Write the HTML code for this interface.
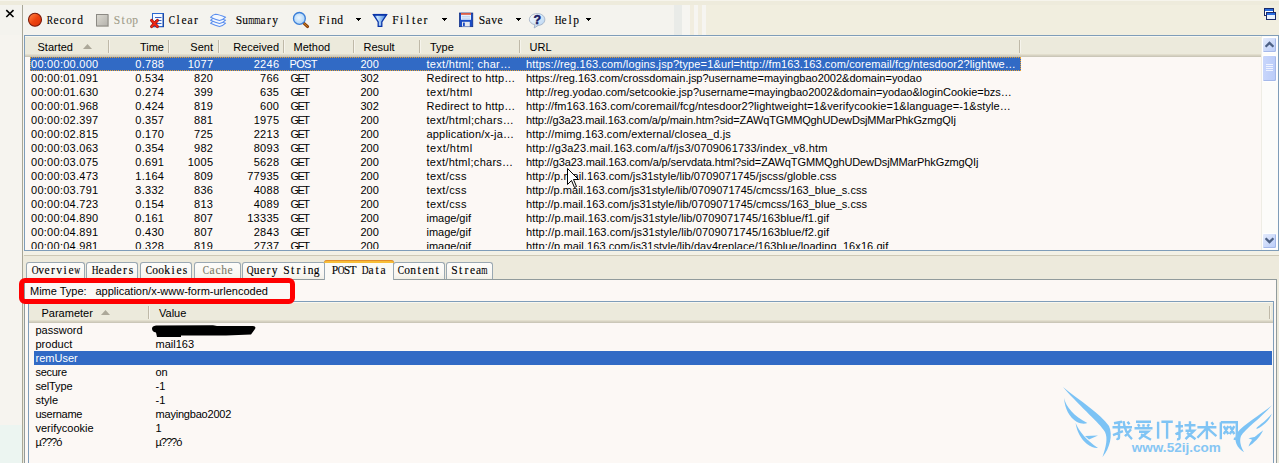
<!DOCTYPE html>
<html><head><meta charset="utf-8">
<style>
*{margin:0;padding:0;box-sizing:border-box}
html,body{width:1279px;height:463px;overflow:hidden}
body{position:relative;background:#F1EEE1;font:11px "Liberation Sans",sans-serif;color:#000}
.a{position:absolute}
.t{position:absolute;white-space:pre;line-height:14px}
.r{text-align:right}
.tb{position:absolute;white-space:nowrap;font:11.5px "Liberation Serif",serif;line-height:14px;color:#000;-webkit-text-stroke:0.12px currentColor}
.c{display:inline-block;width:6px;text-align:center;height:14px}
.c i{font-style:normal;display:inline-block;margin:0 -4px}
.sep{position:absolute;width:1px;background:#BFB9A8;border-right:1px solid #F6F4EC;box-sizing:content-box}
</style></head><body>

<div class="a" style="left:0;top:0;width:674px;height:35px;background:#F4F3EE"></div>
<div class="a" style="left:674px;top:0;width:8px;height:35px;background:#E9EBE8"></div>
<div class="a" style="left:682px;top:0;width:8px;height:35px;background:#F6F5F1"></div>
<div class="a" style="left:690px;top:0;width:4px;height:35px;background:#F1EDDF"></div>
<div class="a" style="left:694px;top:0;width:4px;height:35px;background:#F6F5F1"></div>
<div class="a" style="left:698px;top:0;width:4px;height:35px;background:#F1EDDF"></div>
<div class="a" style="left:702px;top:0;width:4px;height:35px;background:#F6F5F1"></div>
<div class="a" style="left:706px;top:0;width:573px;height:35px;background:#F1EEDF"></div>
<div class="a" style="left:0;top:35px;width:24px;height:428px;background:#F6F4EF"></div>
<div class="a" style="left:0;top:0;width:1279px;height:5px;background:#EEEBDC"></div>
<div class="a" style="left:0;top:0;width:1279px;height:1px;background:#F6F4EC"></div>
<svg class="a" style="left:5px;top:9px" width="10" height="10" viewBox="0 0 10 10"><path d="M1.3 1.2 L8.5 8 M8.5 1.2 L1.3 8" stroke="#000" stroke-width="1.6"/></svg>
<div class="a" style="left:22px;top:5px;width:1px;height:458px;background:#A9A797"></div>
<div class="tb" style="left:47px;top:13px;color:#000"><span class="c"><i style="transform:scaleX(0.82)">R</i></span><span class="c"><i>e</i></span><span class="c"><i>c</i></span><span class="c"><i>o</i></span><span class="c"><i>r</i></span><span class="c"><i>d</i></span></div>
<div class="tb" style="left:114px;top:13px;color:#A19D8A"><span class="c"><i>S</i></span><span class="c"><i>t</i></span><span class="c"><i>o</i></span><span class="c"><i>p</i></span></div>
<div class="tb" style="left:169px;top:13px;color:#000"><span class="c"><i style="transform:scaleX(0.82)">C</i></span><span class="c"><i>l</i></span><span class="c"><i>e</i></span><span class="c"><i>a</i></span><span class="c"><i>r</i></span></div>
<div class="tb" style="left:236px;top:13px;color:#000"><span class="c"><i>S</i></span><span class="c"><i>u</i></span><span class="c"><i style="transform:scaleX(0.7)">m</i></span><span class="c"><i style="transform:scaleX(0.7)">m</i></span><span class="c"><i>a</i></span><span class="c"><i>r</i></span><span class="c"><i>y</i></span></div>
<div class="tb" style="left:319px;top:13px;color:#000"><span class="c"><i>F</i></span><span class="c"><i>i</i></span><span class="c"><i>n</i></span><span class="c"><i>d</i></span></div>
<div class="tb" style="left:392.5px;top:13px;color:#000"><span class="c"><i>F</i></span><span class="c"><i>i</i></span><span class="c"><i>l</i></span><span class="c"><i>t</i></span><span class="c"><i>e</i></span><span class="c"><i>r</i></span></div>
<div class="tb" style="left:479px;top:13px;color:#000"><span class="c"><i>S</i></span><span class="c"><i>a</i></span><span class="c"><i>v</i></span><span class="c"><i>e</i></span></div>
<div class="tb" style="left:555px;top:13px;color:#000"><span class="c"><i style="transform:scaleX(0.82)">H</i></span><span class="c"><i>e</i></span><span class="c"><i>l</i></span><span class="c"><i>p</i></span></div>
<svg class="a" style="left:356px;top:18px" width="6" height="4"><path d="M0 0H5V1H4V2H3V3H2V2H1V1H0Z" fill="#000"/></svg>
<svg class="a" style="left:442px;top:18px" width="6" height="4"><path d="M0 0H5V1H4V2H3V3H2V2H1V1H0Z" fill="#000"/></svg>
<svg class="a" style="left:516px;top:18px" width="6" height="4"><path d="M0 0H5V1H4V2H3V3H2V2H1V1H0Z" fill="#000"/></svg>
<svg class="a" style="left:586px;top:18px" width="6" height="4"><path d="M0 0H5V1H4V2H3V3H2V2H1V1H0Z" fill="#000"/></svg>
<svg class="a" style="left:27px;top:12px" width="16" height="16" viewBox="0 0 16 16">
<defs><linearGradient id="rg" x1="0" y1="0" x2="1" y2="1"><stop offset="0" stop-color="#FF8A50"/><stop offset="0.35" stop-color="#F55A20"/><stop offset="0.5" stop-color="#EE4410"/><stop offset="1" stop-color="#D83008"/></linearGradient></defs>
<circle cx="8" cy="7.8" r="6.5" fill="url(#rg)" stroke="#7A1A0A" stroke-width="1.1"/></svg>
<svg class="a" style="left:95px;top:13px" width="15" height="15" viewBox="0 0 15 15">
<defs><linearGradient id="sg" x1="0" y1="0" x2="1" y2="1"><stop offset="0" stop-color="#DCDAD2"/><stop offset="1" stop-color="#B4B2AC"/></linearGradient></defs>
<rect x="2" y="2" width="12" height="12" fill="#D8D6CC"/>
<rect x="1.5" y="1.5" width="11.5" height="11.5" fill="url(#sg)" stroke="#8C8A84" stroke-width="1"/></svg>
<svg class="a" style="left:149px;top:12px" width="17" height="17" viewBox="0 0 17 17">
<rect x="3.5" y="1.5" width="11" height="13" fill="#F4F9FF" stroke="#2C68D0" stroke-width="1"/><rect x="13.5" y="1.5" width="1.5" height="13.5" fill="#1848A8"/><rect x="4" y="15" width="11" height="1" fill="#C8CCD8"/>
<path d="M6 5.5H12.5M6 8.5H12.5M6 11.5H12.5" stroke="#2050C0" stroke-width="0.9"/>
<path d="M2.6 8.4 L8.4 14.6 M8.4 8.4 L2.6 14.6" stroke="#A01008" stroke-width="3" stroke-linecap="round"/>
<path d="M2.6 8.4 L8.4 14.6 M8.4 8.4 L2.6 14.6" stroke="#F02818" stroke-width="1.6" stroke-linecap="round"/></svg>
<svg class="a" style="left:209px;top:12px" width="18" height="16" viewBox="0 0 18 16">
<g fill="#F4F8FE" stroke="#5A8EEE" stroke-width="1.05" stroke-linejoin="round">
<path id="lay" d="M1.6 11.3 Q4 8.6 6 8.5 Q9.5 8.8 16.6 11.2 Q13.5 14.2 10.5 14.6 Q6.5 13.6 1.6 11.3 Z"/>
<path d="M1.6 8.3 Q4 5.6 6 5.5 Q9.5 5.8 16.6 8.2 Q13.5 11.2 10.5 11.6 Q6.5 10.6 1.6 8.3 Z"/>
<path d="M1.6 5.3 Q4 2.6 6.5 2.3 Q10 2.6 16.6 5.2 Q13.5 8.2 10.5 8.6 Q6.5 7.6 1.6 5.3 Z"/>
</g></svg>
<svg class="a" style="left:292px;top:11px" width="18" height="18" viewBox="0 0 18 18">
<defs><radialGradient id="mg" cx="0.45" cy="0.45" r="0.6"><stop offset="0" stop-color="#EAF5FF"/><stop offset="1" stop-color="#A6D0F6"/></radialGradient></defs>
<path d="M11.6 12 L15.6 15.6" stroke="#8A3A08" stroke-width="3" stroke-linecap="round"/>
<path d="M11.8 12.2 L15.4 15.4" stroke="#D09020" stroke-width="1" stroke-linecap="round"/>
<circle cx="7.4" cy="7.4" r="5.9" fill="url(#mg)" stroke="#3A7ED8" stroke-width="1.3"/></svg>
<svg class="a" style="left:372px;top:12px" width="16" height="16" viewBox="0 0 16 16">
<defs><linearGradient id="fg" x1="0" y1="0" x2="1" y2="0"><stop offset="0" stop-color="#4A8CE0"/><stop offset="0.3" stop-color="#C8E6FF"/><stop offset="1" stop-color="#3A7AD8"/></linearGradient></defs>
<path d="M1.4 2.6 H14.6 L9.8 10 V14.4 H6.2 V10 Z" fill="url(#fg)" stroke="#0A34A8" stroke-width="1.3" stroke-linejoin="miter"/>
<path d="M1.4 2.8 H14.6" stroke="#0A34A8" stroke-width="1.8"/></svg>
<svg class="a" style="left:459px;top:12px" width="15" height="16" viewBox="0 0 15 16">
<rect x="0.4" y="1" width="13.4" height="13.7" fill="#1C4CC4" stroke="#0C2A80" stroke-width="0.7"/>
<rect x="2" y="1.2" width="10" height="6.6" fill="#E2F0FF"/><rect x="2" y="1.2" width="10" height="1.5" fill="#E04420"/>
<path d="M3 4.6H11M3 6.2H11" stroke="#B0C4E0" stroke-width="0.6"/>
<rect x="3" y="9.8" width="7.8" height="4.7" fill="#E6E8EE"/><rect x="4" y="10.6" width="1.8" height="3.5" fill="#1C4CC4"/></svg>
<svg class="a" style="left:528px;top:12px" width="18" height="17" viewBox="0 0 18 17">
<defs><linearGradient id="hg" x1="0" y1="0" x2="1" y2="1"><stop offset="0" stop-color="#FFFFFF"/><stop offset="1" stop-color="#B0D0F0"/></linearGradient></defs>
<path d="M9.3 1.6 C13.8 1.6 16.8 4.2 16.8 7.6 C16.8 10.8 14 13.2 10.2 13.4 L6.2 16 L6.9 12.8 C3.6 12 1.4 10 1.4 7.6 C1.4 4.2 4.6 1.6 9.3 1.6Z" fill="url(#hg)" stroke="#98A8C0" stroke-width="0.8"/>
<text x="9.3" y="11.6" text-anchor="middle" font-family="Liberation Sans" font-weight="bold" font-size="12.5" fill="#1C1C64" stroke="#1C1C64" stroke-width="0.5">?</text></svg>
<svg class="a" style="left:1263px;top:7px" width="15" height="15" viewBox="0 0 15 15">
<rect x="1.5" y="1.5" width="9" height="7" fill="#FFFFFF" stroke="#1A2A6A"/><rect x="2" y="2" width="8" height="2" fill="#2A6CE0"/>
<rect x="3.5" y="5.5" width="9" height="7" fill="#EAF2FE" stroke="#1A2A6A"/><rect x="4" y="6" width="8" height="2" fill="#2A6CE0"/></svg>
<div class="a" style="left:24px;top:35px;width:1255px;height:216px;border:1px solid #7F9DB9;background:#FCF8F5"></div>
<div class="a" style="left:25px;top:36px;width:1237px;height:21px;background:#ECEADC"></div>
<div class="a" style="left:25px;top:36px;width:1236px;height:1px;background:#F8F7F0"></div>
<div class="a" style="left:25px;top:54px;width:1237px;height:1px;background:#E2DECD"></div>
<div class="a" style="left:25px;top:55px;width:1237px;height:1px;background:#D6D2C2"></div>
<div class="a" style="left:25px;top:56px;width:1237px;height:1px;background:#CBC7B8"></div>
<div class="sep" style="left:108px;top:40px;height:13px"></div>
<div class="sep" style="left:168px;top:40px;height:13px"></div>
<div class="sep" style="left:218px;top:40px;height:13px"></div>
<div class="sep" style="left:283px;top:40px;height:13px"></div>
<div class="sep" style="left:353px;top:40px;height:13px"></div>
<div class="sep" style="left:419px;top:40px;height:13px"></div>
<div class="sep" style="left:519px;top:40px;height:13px"></div>
<div class="sep" style="left:1019px;top:40px;height:13px"></div>
<svg class="a" style="left:83px;top:44px" width="9" height="5"><path d="M0 5 L4.5 0 L9 5Z" fill="#ACA899"/></svg>
<div class="t" style="left:37.5px;top:40px">Started</div>
<div class="t r" style="left:64px;width:100px;top:40px">Time</div>
<div class="t r" style="left:113px;width:100px;top:40px">Sent</div>
<div class="t r" style="left:179px;width:100px;top:40px">Received</div>
<div class="t" style="left:293.5px;top:40px">Method</div>
<div class="t" style="left:363.5px;top:40px">Result</div>
<div class="t" style="left:430px;top:40px">Type</div>
<div class="t" style="left:529.5px;top:40px">URL</div>
<div class="a" style="left:30px;top:57px;width:991px;height:14px;background:#316AC5;outline:1px dotted #E8A030;outline-offset:-1px"></div>
<div class="t" style="left:31px;top:57px;color:#FFFFFF;letter-spacing:0.27px">00:00:00.000</div>
<div class="t r" style="left:64.3px;width:100px;top:57px;color:#FFFFFF;letter-spacing:0.3px">0.788</div>
<div class="t r" style="left:113.3px;width:100px;top:57px;color:#FFFFFF;letter-spacing:0.3px">1077</div>
<div class="t r" style="left:179.3px;width:100px;top:57px;color:#FFFFFF;letter-spacing:0.3px">2246</div>
<div class="t" style="left:289.5px;top:57px;color:#FFFFFF;letter-spacing:-0.67px">POST</div>
<div class="t" style="left:360.5px;top:57px;color:#FFFFFF">200</div>
<div class="t" style="left:426.5px;top:57px;color:#FFFFFF;letter-spacing:0.300px">text/html; char…</div>
<div class="t" style="left:526px;top:57px;color:#FFFFFF;letter-spacing:0.132px">https://reg.163.com/logins.jsp?type=1&amp;url=http://fm163.163.com/coremail/fcg/ntesdoor2?lightwe…</div>
<div class="t" style="left:31px;top:71px;color:#000;letter-spacing:0.27px">00:00:01.091</div>
<div class="t r" style="left:64.3px;width:100px;top:71px;color:#000;letter-spacing:0.3px">0.534</div>
<div class="t r" style="left:113.3px;width:100px;top:71px;color:#000;letter-spacing:0.3px">820</div>
<div class="t r" style="left:179.3px;width:100px;top:71px;color:#000;letter-spacing:0.3px">766</div>
<div class="t" style="left:290.5px;top:71px;color:#000;letter-spacing:-1.6px">GET</div>
<div class="t" style="left:360.5px;top:71px;color:#000">302</div>
<div class="t" style="left:426.5px;top:71px;color:#000;letter-spacing:0.200px">Redirect to http…</div>
<div class="t" style="left:526px;top:71px;color:#000;letter-spacing:-0.006px">https://reg.163.com/crossdomain.jsp?username=mayingbao2002&amp;domain=yodao</div>
<div class="t" style="left:31px;top:85px;color:#000;letter-spacing:0.27px">00:00:01.630</div>
<div class="t r" style="left:64.3px;width:100px;top:85px;color:#000;letter-spacing:0.3px">0.274</div>
<div class="t r" style="left:113.3px;width:100px;top:85px;color:#000;letter-spacing:0.3px">399</div>
<div class="t r" style="left:179.3px;width:100px;top:85px;color:#000;letter-spacing:0.3px">635</div>
<div class="t" style="left:290.5px;top:85px;color:#000;letter-spacing:-1.6px">GET</div>
<div class="t" style="left:360.5px;top:85px;color:#000">200</div>
<div class="t" style="left:426.5px;top:85px;color:#000;letter-spacing:0.512px">text/html</div>
<div class="t" style="left:526px;top:85px;color:#000;letter-spacing:0.000px">http://reg.yodao.com/setcookie.jsp?username=mayingbao2002&amp;domain=yodao&amp;loginCookie=bzs…</div>
<div class="t" style="left:31px;top:99px;color:#000;letter-spacing:0.27px">00:00:01.968</div>
<div class="t r" style="left:64.3px;width:100px;top:99px;color:#000;letter-spacing:0.3px">0.424</div>
<div class="t r" style="left:113.3px;width:100px;top:99px;color:#000;letter-spacing:0.3px">819</div>
<div class="t r" style="left:179.3px;width:100px;top:99px;color:#000;letter-spacing:0.3px">600</div>
<div class="t" style="left:290.5px;top:99px;color:#000;letter-spacing:-1.6px">GET</div>
<div class="t" style="left:360.5px;top:99px;color:#000">302</div>
<div class="t" style="left:426.5px;top:99px;color:#000;letter-spacing:0.200px">Redirect to http…</div>
<div class="t" style="left:526px;top:99px;color:#000;letter-spacing:0.097px">http://fm163.163.com/coremail/fcg/ntesdoor2?lightweight=1&amp;verifycookie=1&amp;language=-1&amp;style…</div>
<div class="t" style="left:31px;top:113px;color:#000;letter-spacing:0.27px">00:00:02.397</div>
<div class="t r" style="left:64.3px;width:100px;top:113px;color:#000;letter-spacing:0.3px">0.357</div>
<div class="t r" style="left:113.3px;width:100px;top:113px;color:#000;letter-spacing:0.3px">881</div>
<div class="t r" style="left:179.3px;width:100px;top:113px;color:#000;letter-spacing:0.3px">1975</div>
<div class="t" style="left:290.5px;top:113px;color:#000;letter-spacing:-1.6px">GET</div>
<div class="t" style="left:360.5px;top:113px;color:#000">200</div>
<div class="t" style="left:426.5px;top:113px;color:#000;letter-spacing:0.313px">text/html;chars…</div>
<div class="t" style="left:526px;top:113px;color:#000;letter-spacing:-0.145px">http://g3a23.mail.163.com/a/p/main.htm?sid=ZAWqTGMMQghUDewDsjMMarPhkGzmgQIj</div>
<div class="t" style="left:31px;top:127px;color:#000;letter-spacing:0.27px">00:00:02.815</div>
<div class="t r" style="left:64.3px;width:100px;top:127px;color:#000;letter-spacing:0.3px">0.170</div>
<div class="t r" style="left:113.3px;width:100px;top:127px;color:#000;letter-spacing:0.3px">725</div>
<div class="t r" style="left:179.3px;width:100px;top:127px;color:#000;letter-spacing:0.3px">2213</div>
<div class="t" style="left:290.5px;top:127px;color:#000;letter-spacing:-1.6px">GET</div>
<div class="t" style="left:360.5px;top:127px;color:#000">200</div>
<div class="t" style="left:426.5px;top:127px;color:#000;letter-spacing:0.194px">application/x-ja…</div>
<div class="t" style="left:526px;top:127px;color:#000;letter-spacing:0.123px">http://mimg.163.com/external/closea_d.js</div>
<div class="t" style="left:31px;top:141px;color:#000;letter-spacing:0.27px">00:00:03.063</div>
<div class="t r" style="left:64.3px;width:100px;top:141px;color:#000;letter-spacing:0.3px">0.354</div>
<div class="t r" style="left:113.3px;width:100px;top:141px;color:#000;letter-spacing:0.3px">982</div>
<div class="t r" style="left:179.3px;width:100px;top:141px;color:#000;letter-spacing:0.3px">8093</div>
<div class="t" style="left:290.5px;top:141px;color:#000;letter-spacing:-1.6px">GET</div>
<div class="t" style="left:360.5px;top:141px;color:#000">200</div>
<div class="t" style="left:426.5px;top:141px;color:#000;letter-spacing:0.512px">text/html</div>
<div class="t" style="left:526px;top:141px;color:#000;letter-spacing:0.173px">http://g3a23.mail.163.com/a/f/js3/0709061733/index_v8.htm</div>
<div class="t" style="left:31px;top:155px;color:#000;letter-spacing:0.27px">00:00:03.075</div>
<div class="t r" style="left:64.3px;width:100px;top:155px;color:#000;letter-spacing:0.3px">0.691</div>
<div class="t r" style="left:113.3px;width:100px;top:155px;color:#000;letter-spacing:0.3px">1005</div>
<div class="t r" style="left:179.3px;width:100px;top:155px;color:#000;letter-spacing:0.3px">5628</div>
<div class="t" style="left:290.5px;top:155px;color:#000;letter-spacing:-1.6px">GET</div>
<div class="t" style="left:360.5px;top:155px;color:#000">200</div>
<div class="t" style="left:426.5px;top:155px;color:#000;letter-spacing:0.273px">text/html;chars…</div>
<div class="t" style="left:526px;top:155px;color:#000;letter-spacing:-0.114px">http://g3a23.mail.163.com/a/p/servdata.html?sid=ZAWqTGMMQghUDewDsjMMarPhkGzmgQIj</div>
<div class="t" style="left:31px;top:169px;color:#000;letter-spacing:0.27px">00:00:03.473</div>
<div class="t r" style="left:64.3px;width:100px;top:169px;color:#000;letter-spacing:0.3px">1.164</div>
<div class="t r" style="left:113.3px;width:100px;top:169px;color:#000;letter-spacing:0.3px">809</div>
<div class="t r" style="left:179.3px;width:100px;top:169px;color:#000;letter-spacing:0.3px">77935</div>
<div class="t" style="left:290.5px;top:169px;color:#000;letter-spacing:-1.6px">GET</div>
<div class="t" style="left:360.5px;top:169px;color:#000">200</div>
<div class="t" style="left:426.5px;top:169px;color:#000;letter-spacing:0.386px">text/css</div>
<div class="t" style="left:526px;top:169px;color:#000;letter-spacing:0.077px">http://p.mail.163.com/js31style/lib/0709071745/jscss/globle.css</div>
<div class="t" style="left:31px;top:183px;color:#000;letter-spacing:0.27px">00:00:03.791</div>
<div class="t r" style="left:64.3px;width:100px;top:183px;color:#000;letter-spacing:0.3px">3.332</div>
<div class="t r" style="left:113.3px;width:100px;top:183px;color:#000;letter-spacing:0.3px">836</div>
<div class="t r" style="left:179.3px;width:100px;top:183px;color:#000;letter-spacing:0.3px">4088</div>
<div class="t" style="left:290.5px;top:183px;color:#000;letter-spacing:-1.6px">GET</div>
<div class="t" style="left:360.5px;top:183px;color:#000">200</div>
<div class="t" style="left:426.5px;top:183px;color:#000;letter-spacing:0.386px">text/css</div>
<div class="t" style="left:526px;top:183px;color:#000;letter-spacing:0.015px">http://p.mail.163.com/js31style/lib/0709071745/cmcss/163_blue_s.css</div>
<div class="t" style="left:31px;top:197px;color:#000;letter-spacing:0.27px">00:00:04.723</div>
<div class="t r" style="left:64.3px;width:100px;top:197px;color:#000;letter-spacing:0.3px">0.154</div>
<div class="t r" style="left:113.3px;width:100px;top:197px;color:#000;letter-spacing:0.3px">813</div>
<div class="t r" style="left:179.3px;width:100px;top:197px;color:#000;letter-spacing:0.3px">4089</div>
<div class="t" style="left:290.5px;top:197px;color:#000;letter-spacing:-1.6px">GET</div>
<div class="t" style="left:360.5px;top:197px;color:#000">200</div>
<div class="t" style="left:426.5px;top:197px;color:#000;letter-spacing:0.386px">text/css</div>
<div class="t" style="left:526px;top:197px;color:#000;letter-spacing:0.015px">http://p.mail.163.com/js31style/lib/0709071745/cmcss/163_blue_s.css</div>
<div class="t" style="left:31px;top:211px;color:#000;letter-spacing:0.27px">00:00:04.890</div>
<div class="t r" style="left:64.3px;width:100px;top:211px;color:#000;letter-spacing:0.3px">0.161</div>
<div class="t r" style="left:113.3px;width:100px;top:211px;color:#000;letter-spacing:0.3px">807</div>
<div class="t r" style="left:179.3px;width:100px;top:211px;color:#000;letter-spacing:0.3px">13335</div>
<div class="t" style="left:290.5px;top:211px;color:#000;letter-spacing:-1.6px">GET</div>
<div class="t" style="left:360.5px;top:211px;color:#000">200</div>
<div class="t" style="left:426.5px;top:211px;color:#000;letter-spacing:-0.025px">image/gif</div>
<div class="t" style="left:526px;top:211px;color:#000;letter-spacing:0.130px">http://p.mail.163.com/js31style/lib/0709071745/163blue/f1.gif</div>
<div class="t" style="left:31px;top:225px;color:#000;letter-spacing:0.27px">00:00:04.891</div>
<div class="t r" style="left:64.3px;width:100px;top:225px;color:#000;letter-spacing:0.3px">0.430</div>
<div class="t r" style="left:113.3px;width:100px;top:225px;color:#000;letter-spacing:0.3px">807</div>
<div class="t r" style="left:179.3px;width:100px;top:225px;color:#000;letter-spacing:0.3px">2843</div>
<div class="t" style="left:290.5px;top:225px;color:#000;letter-spacing:-1.6px">GET</div>
<div class="t" style="left:360.5px;top:225px;color:#000">200</div>
<div class="t" style="left:426.5px;top:225px;color:#000;letter-spacing:-0.025px">image/gif</div>
<div class="t" style="left:526px;top:225px;color:#000;letter-spacing:0.130px">http://p.mail.163.com/js31style/lib/0709071745/163blue/f2.gif</div>
<div class="t" style="left:31px;top:239px;color:#000;letter-spacing:0.27px">00:00:04.981</div>
<div class="t r" style="left:64.3px;width:100px;top:239px;color:#000;letter-spacing:0.3px">0.328</div>
<div class="t r" style="left:113.3px;width:100px;top:239px;color:#000;letter-spacing:0.3px">819</div>
<div class="t r" style="left:179.3px;width:100px;top:239px;color:#000;letter-spacing:0.3px">2737</div>
<div class="t" style="left:290.5px;top:239px;color:#000;letter-spacing:-1.6px">GET</div>
<div class="t" style="left:360.5px;top:239px;color:#000">200</div>
<div class="t" style="left:426.5px;top:239px;color:#000;letter-spacing:-0.025px">image/gif</div>
<div class="t" style="left:526px;top:239px;color:#000;letter-spacing:0.079px">http://p.mail.163.com/js31style/lib/day4replace/163blue/loading_16x16.gif</div>
<div class="a" style="left:25px;top:250px;width:1253px;height:1px;background:#7F9DB9"></div>
<div class="a" style="left:1261px;top:36px;width:17px;height:214px;background:#FCFCFA;border-left:1px solid #EEEDE5"></div>
<div class="a" style="left:1262px;top:37px;width:15px;height:16px;border:1px solid #FFFFFF;border-radius:2px;background:linear-gradient(135deg,#E4EBFC,#B9CCF8);box-shadow:inset -1px -1px 0 #A5B9EA"></div>
<svg class="a" style="left:1265px;top:41px" width="9" height="7"><path d="M0.6 5.8 L4.5 1.9 L8.4 5.8" stroke="#4D6185" stroke-width="2.3" fill="none"/></svg>
<div class="a" style="left:1262px;top:55px;width:15px;height:27px;border:1px solid #FFFFFF;border-radius:2px;background:linear-gradient(90deg,#C8D6FB,#BACCF9);box-shadow:inset -1px -1px 0 #A5B9EA"></div>
<svg class="a" style="left:1266px;top:64px" width="7" height="8"><path d="M0 0.5H7M0 2.5H7M0 4.5H7M0 6.5H7" stroke="#EEF3FF" stroke-width="1"/></svg>
<div class="a" style="left:1262px;top:233px;width:15px;height:16px;border:1px solid #FFFFFF;border-radius:2px;background:linear-gradient(135deg,#E4EBFC,#B9CCF8);box-shadow:inset -1px -1px 0 #A5B9EA"></div>
<svg class="a" style="left:1265px;top:237px" width="9" height="7"><path d="M0.6 1.2 L4.5 5.1 L8.4 1.2" stroke="#4D6185" stroke-width="2.3" fill="none"/></svg>
<svg class="a" style="left:567px;top:168px" width="13" height="21" viewBox="0 0 13 21">
<path d="M0.5 0.5 L0.5 16.5 L4.5 12.5 L7.5 19.5 L9.5 18.5 L6.5 11.5 L11.5 11.5 Z" fill="#FFFFFF" stroke="#000" stroke-width="1"/></svg>
<div class="a" style="left:23px;top:251px;width:1256px;height:212px;background:#EDEADC"></div>
<div class="a" style="left:23px;top:251px;width:1256px;height:4px;background:#F3F1E6"></div>
<div class="a" style="left:24px;top:255px;width:1255px;height:1px;background:#CDC8B6"></div>
<div class="a" style="left:24px;top:279px;width:1253px;height:190px;background:#FCF8F5;border-left:1px solid #919B9C;border-top:1px solid #919B9C;border-right:1px solid #919B9C"></div>
<div class="a" style="left:26px;top:262px;width:59px;height:17px;background:linear-gradient(#FDFCFA,#F9F7F2 70%,#F1EFE6);border:1px solid #9AA8B2;border-bottom:none;border-radius:3px 3px 0 0"></div>
<div class="tb" style="left:32px;top:263px;color:#000"><span class="c"><i style="transform:scaleX(0.82)">O</i></span><span class="c"><i>v</i></span><span class="c"><i>e</i></span><span class="c"><i>r</i></span><span class="c"><i>v</i></span><span class="c"><i>i</i></span><span class="c"><i>e</i></span><span class="c"><i style="transform:scaleX(0.7)">w</i></span></div>
<div class="a" style="left:86px;top:262px;width:52px;height:17px;background:linear-gradient(#FDFCFA,#F9F7F2 70%,#F1EFE6);border:1px solid #9AA8B2;border-bottom:none;border-radius:3px 3px 0 0"></div>
<div class="tb" style="left:92px;top:263px;color:#000"><span class="c"><i style="transform:scaleX(0.82)">H</i></span><span class="c"><i>e</i></span><span class="c"><i>a</i></span><span class="c"><i>d</i></span><span class="c"><i>e</i></span><span class="c"><i>r</i></span><span class="c"><i>s</i></span></div>
<div class="a" style="left:140px;top:262px;width:52px;height:17px;background:linear-gradient(#FDFCFA,#F9F7F2 70%,#F1EFE6);border:1px solid #9AA8B2;border-bottom:none;border-radius:3px 3px 0 0"></div>
<div class="tb" style="left:146px;top:263px;color:#000"><span class="c"><i style="transform:scaleX(0.82)">C</i></span><span class="c"><i>o</i></span><span class="c"><i>o</i></span><span class="c"><i>k</i></span><span class="c"><i>i</i></span><span class="c"><i>e</i></span><span class="c"><i>s</i></span></div>
<div class="a" style="left:194px;top:262px;width:47px;height:17px;background:linear-gradient(#FDFCFA,#F9F7F2 70%,#F1EFE6);border:1px solid #9AA8B2;border-bottom:none;border-radius:3px 3px 0 0"></div>
<div class="tb" style="left:203px;top:263px;color:#7B7968"><span class="c"><i style="transform:scaleX(0.82)">C</i></span><span class="c"><i>a</i></span><span class="c"><i>c</i></span><span class="c"><i>h</i></span><span class="c"><i>e</i></span></div>
<div class="a" style="left:242px;top:262px;width:84px;height:17px;background:linear-gradient(#FDFCFA,#F9F7F2 70%,#F1EFE6);border:1px solid #9AA8B2;border-bottom:none;border-radius:3px 3px 0 0"></div>
<div class="tb" style="left:247.5px;top:263px;color:#000"><span class="c"><i style="transform:scaleX(0.82)">Q</i></span><span class="c"><i>u</i></span><span class="c"><i>e</i></span><span class="c"><i>r</i></span><span class="c"><i>y</i></span><span class="c">&nbsp;</span><span class="c"><i>S</i></span><span class="c"><i>t</i></span><span class="c"><i>r</i></span><span class="c"><i>i</i></span><span class="c"><i>n</i></span><span class="c"><i>g</i></span></div>
<div class="a" style="left:393px;top:262px;width:52px;height:17px;background:linear-gradient(#FDFCFA,#F9F7F2 70%,#F1EFE6);border:1px solid #9AA8B2;border-bottom:none;border-radius:3px 3px 0 0"></div>
<div class="tb" style="left:398px;top:263px;color:#000"><span class="c"><i style="transform:scaleX(0.82)">C</i></span><span class="c"><i>o</i></span><span class="c"><i>n</i></span><span class="c"><i>t</i></span><span class="c"><i>e</i></span><span class="c"><i>n</i></span><span class="c"><i>t</i></span></div>
<div class="a" style="left:446px;top:262px;width:47px;height:17px;background:linear-gradient(#FDFCFA,#F9F7F2 70%,#F1EFE6);border:1px solid #9AA8B2;border-bottom:none;border-radius:3px 3px 0 0"></div>
<div class="tb" style="left:451.5px;top:263px;color:#000"><span class="c"><i>S</i></span><span class="c"><i>t</i></span><span class="c"><i>r</i></span><span class="c"><i>e</i></span><span class="c"><i>a</i></span><span class="c"><i style="transform:scaleX(0.7)">m</i></span></div>
<div class="a" style="left:324px;top:260px;width:70px;height:20px;background:#FBFAF6;border:1px solid #9AA8B2;border-bottom:none;border-radius:3px 3px 0 0"></div>
<div class="a" style="left:324px;top:260px;width:70px;height:3px;background:#F7BE38;border-top:1px solid #E38E2A;border-radius:3px 3px 0 0"></div>
<div class="tb" style="left:332px;top:263px"><span class="c"><i>P</i></span><span class="c"><i style="transform:scaleX(0.82)">O</i></span><span class="c"><i>S</i></span><span class="c"><i>T</i></span><span class="c">&nbsp;</span><span class="c"><i style="transform:scaleX(0.82)">D</i></span><span class="c"><i>a</i></span><span class="c"><i>t</i></span><span class="c"><i>a</i></span></div>
<div class="t" style="left:30px;top:284px">Mime Type:</div>
<div class="t" style="left:95.5px;top:284px">application/x-www-form-urlencoded</div>
<div class="a" style="left:28px;top:301px;width:1246px;height:170px;border:1px solid #7F9DB9;background:#FCF8F5"></div>
<div class="a" style="left:29px;top:302px;width:1244px;height:21px;background:#ECEADC"></div>
<div class="a" style="left:29px;top:302px;width:1244px;height:1px;background:#F8F7F0"></div>
<div class="a" style="left:29px;top:320px;width:1244px;height:1px;background:#E2DECD"></div>
<div class="a" style="left:29px;top:321px;width:1244px;height:1px;background:#D6D2C2"></div>
<div class="a" style="left:29px;top:322px;width:1244px;height:1px;background:#CBC7B8"></div>
<div class="sep" style="left:148px;top:306px;height:13px"></div>
<div class="sep" style="left:1269px;top:306px;height:13px"></div>
<svg class="a" style="left:101px;top:310px" width="9" height="5"><path d="M0 5 L4.5 0 L9 5Z" fill="#ACA899"/></svg>
<div class="t" style="left:41.5px;top:306px">Parameter</div>
<div class="t" style="left:159px;top:306px">Value</div>
<div class="a" style="left:34px;top:351px;width:1238px;height:14px;background:#316AC5"></div>
<div class="t" style="left:35.5px;top:323px;color:#000;letter-spacing:0px">password</div>
<div class="t" style="left:35.5px;top:337px;color:#000;letter-spacing:0px">product</div>
<div class="t" style="left:155.5px;top:337px;color:#000;letter-spacing:0px">mail163</div>
<div class="t" style="left:35.5px;top:351px;color:#FFFFFF;letter-spacing:0px">remUser</div>
<div class="t" style="left:35.5px;top:365px;color:#000;letter-spacing:-0.28px">secure</div>
<div class="t" style="left:155.5px;top:365px;color:#000;letter-spacing:0px">on</div>
<div class="t" style="left:35.5px;top:379px;color:#000;letter-spacing:-0.15px">selType</div>
<div class="t" style="left:155.5px;top:379px;color:#000;letter-spacing:0px">-1</div>
<div class="t" style="left:35.5px;top:393px;color:#000;letter-spacing:0px">style</div>
<div class="t" style="left:155.5px;top:393px;color:#000;letter-spacing:0px">-1</div>
<div class="t" style="left:35.5px;top:407px;color:#000;letter-spacing:-0.28px">username</div>
<div class="t" style="left:155.5px;top:407px;color:#000;letter-spacing:-0.2px">mayingbao2002</div>
<div class="t" style="left:35.5px;top:421px;color:#000;letter-spacing:0px">verifycookie</div>
<div class="t" style="left:155.5px;top:421px;color:#000;letter-spacing:0px">1</div>
<div class="t" style="left:35.5px;top:435px;color:#000;letter-spacing:-1.0px">µ???ó</div>
<div class="t" style="left:155.5px;top:435px;color:#000;letter-spacing:-1.0px">µ???ó</div>
<svg class="a" style="left:151px;top:324px" width="106" height="14" viewBox="0 0 106 14"><path d="M1 4.5 Q1 2 5 1.5 L62 1.2 L66 2 L102 2 Q105.5 2.5 104 5 L100 10.5 L75 11.5 L30 11.5 L30 13 L6 13 L5 8.5 Q1 8 1 4.5 Z" fill="#000"/></svg>
<div class="a" style="left:19px;top:278px;width:276px;height:26px;border:5px solid #FF0000;border-radius:6px"></div>
<div class="a" style="left:0;top:425px;width:22px;height:38px;background:#ECF5F1"></div>
<div class="a" style="left:25px;top:249px;width:1236px;height:1px;background:#FCF8F5"></div>
<svg class="a" style="left:1055px;top:383px" width="224" height="80" viewBox="0 0 224 80">
<g fill="#7CC3F5">
<path d="M8 4 C25 18 45 30 54 43 C58 52 55 65 47.5 74 C51 64 53 55 50 49 C44 39 28 27 8 4 Z"/>
<path d="M9 15 C11 24 19 33 32.3 40 C30 41 26 41 22 39 C14 34 10 26 9 15 Z"/>
<path d="M20.6 40 C24 48 31 57 43 65 C40 65.5 36 64 32 61 C26 56 22 49 20.6 40 Z"/>
<path d="M30 53 L43 52.6 L34 56.5 Z"/>
<path d="M217 22.3 C205 32 188 42 182 50 C178 57 182 65 189.1 69.3 C186 64 184 58 186 53 C190 46 205 36 217 22.3 Z"/>
<path d="M217 30.4 C214 38 208 43 201.6 46 C201 44.5 204 43 206 41 C210 38 214 34 217 30.4 Z"/>
<path d="M208.2 47.2 C205 54 199 60 193.5 63.4 C195 58 200 53 208.2 47.2 Z"/>
<path d="M193.5 55.3 L204 53 L199 57.5 Z"/>
</g>
<g fill="none" stroke="#80C4F4" stroke-width="2.4" stroke-linecap="butt" transform="translate(57,37.2)">
<g transform="translate(0,0)"><path d="M2 3 L10 1.5 M0.5 7 H20 M7 2 V17 Q7 19.5 4.5 18.5 M1 15 L11 11 M11.5 1 Q13 13 20 19 M15.5 1.5 L17.5 4 M19 9 L13 16"/></g>
<g transform="translate(21,0)"><path d="M3 1.5 H18 M5 4 L6.5 6.5 M10.5 4 V6.5 M16 4 L14.5 6.5 M1.5 8 H19.5 M6 11.5 H15 L6 19 M8 14 L18 19.5"/></g>
<g transform="translate(44.4,0)"><path d="M1.7 1.5 V18.5"/><path d="M5 1.5 H16.4 M10.7 1.5 V18.5" /></g>
<g transform="translate(63,0)"><path d="M0.5 6 H8 M4.5 1 V17.5 Q4.5 19.5 2 19 M0.5 14 L8 10 M9.5 5 H20.5 M15 1 V9.5 M10.5 10.5 H19 L10.5 19 M12 12.5 L20.5 19"/></g>
<g transform="translate(84.4,0)"><path d="M1 7 H20 M10.5 1 V19 M9.5 8.5 L1 17.5 M11.5 8.5 L20 16 M15 2 L17 4.5"/></g>
<g transform="translate(106.8,0)"><path d="M2 2 V19 M2 2 H18 V16.5 Q18 19 15 18.5 M5 6 L9.5 14 M9.5 6 L5 14 M11 6 L15.5 14 M15.5 6 L11 14"/></g>
</g>
<text x="76.8" y="69" font-family="Liberation Sans" font-weight="bold" font-size="12" fill="#86C6F4" textLength="89" lengthAdjust="spacingAndGlyphs">www.52ij.com</text>
</svg>
</body></html>
